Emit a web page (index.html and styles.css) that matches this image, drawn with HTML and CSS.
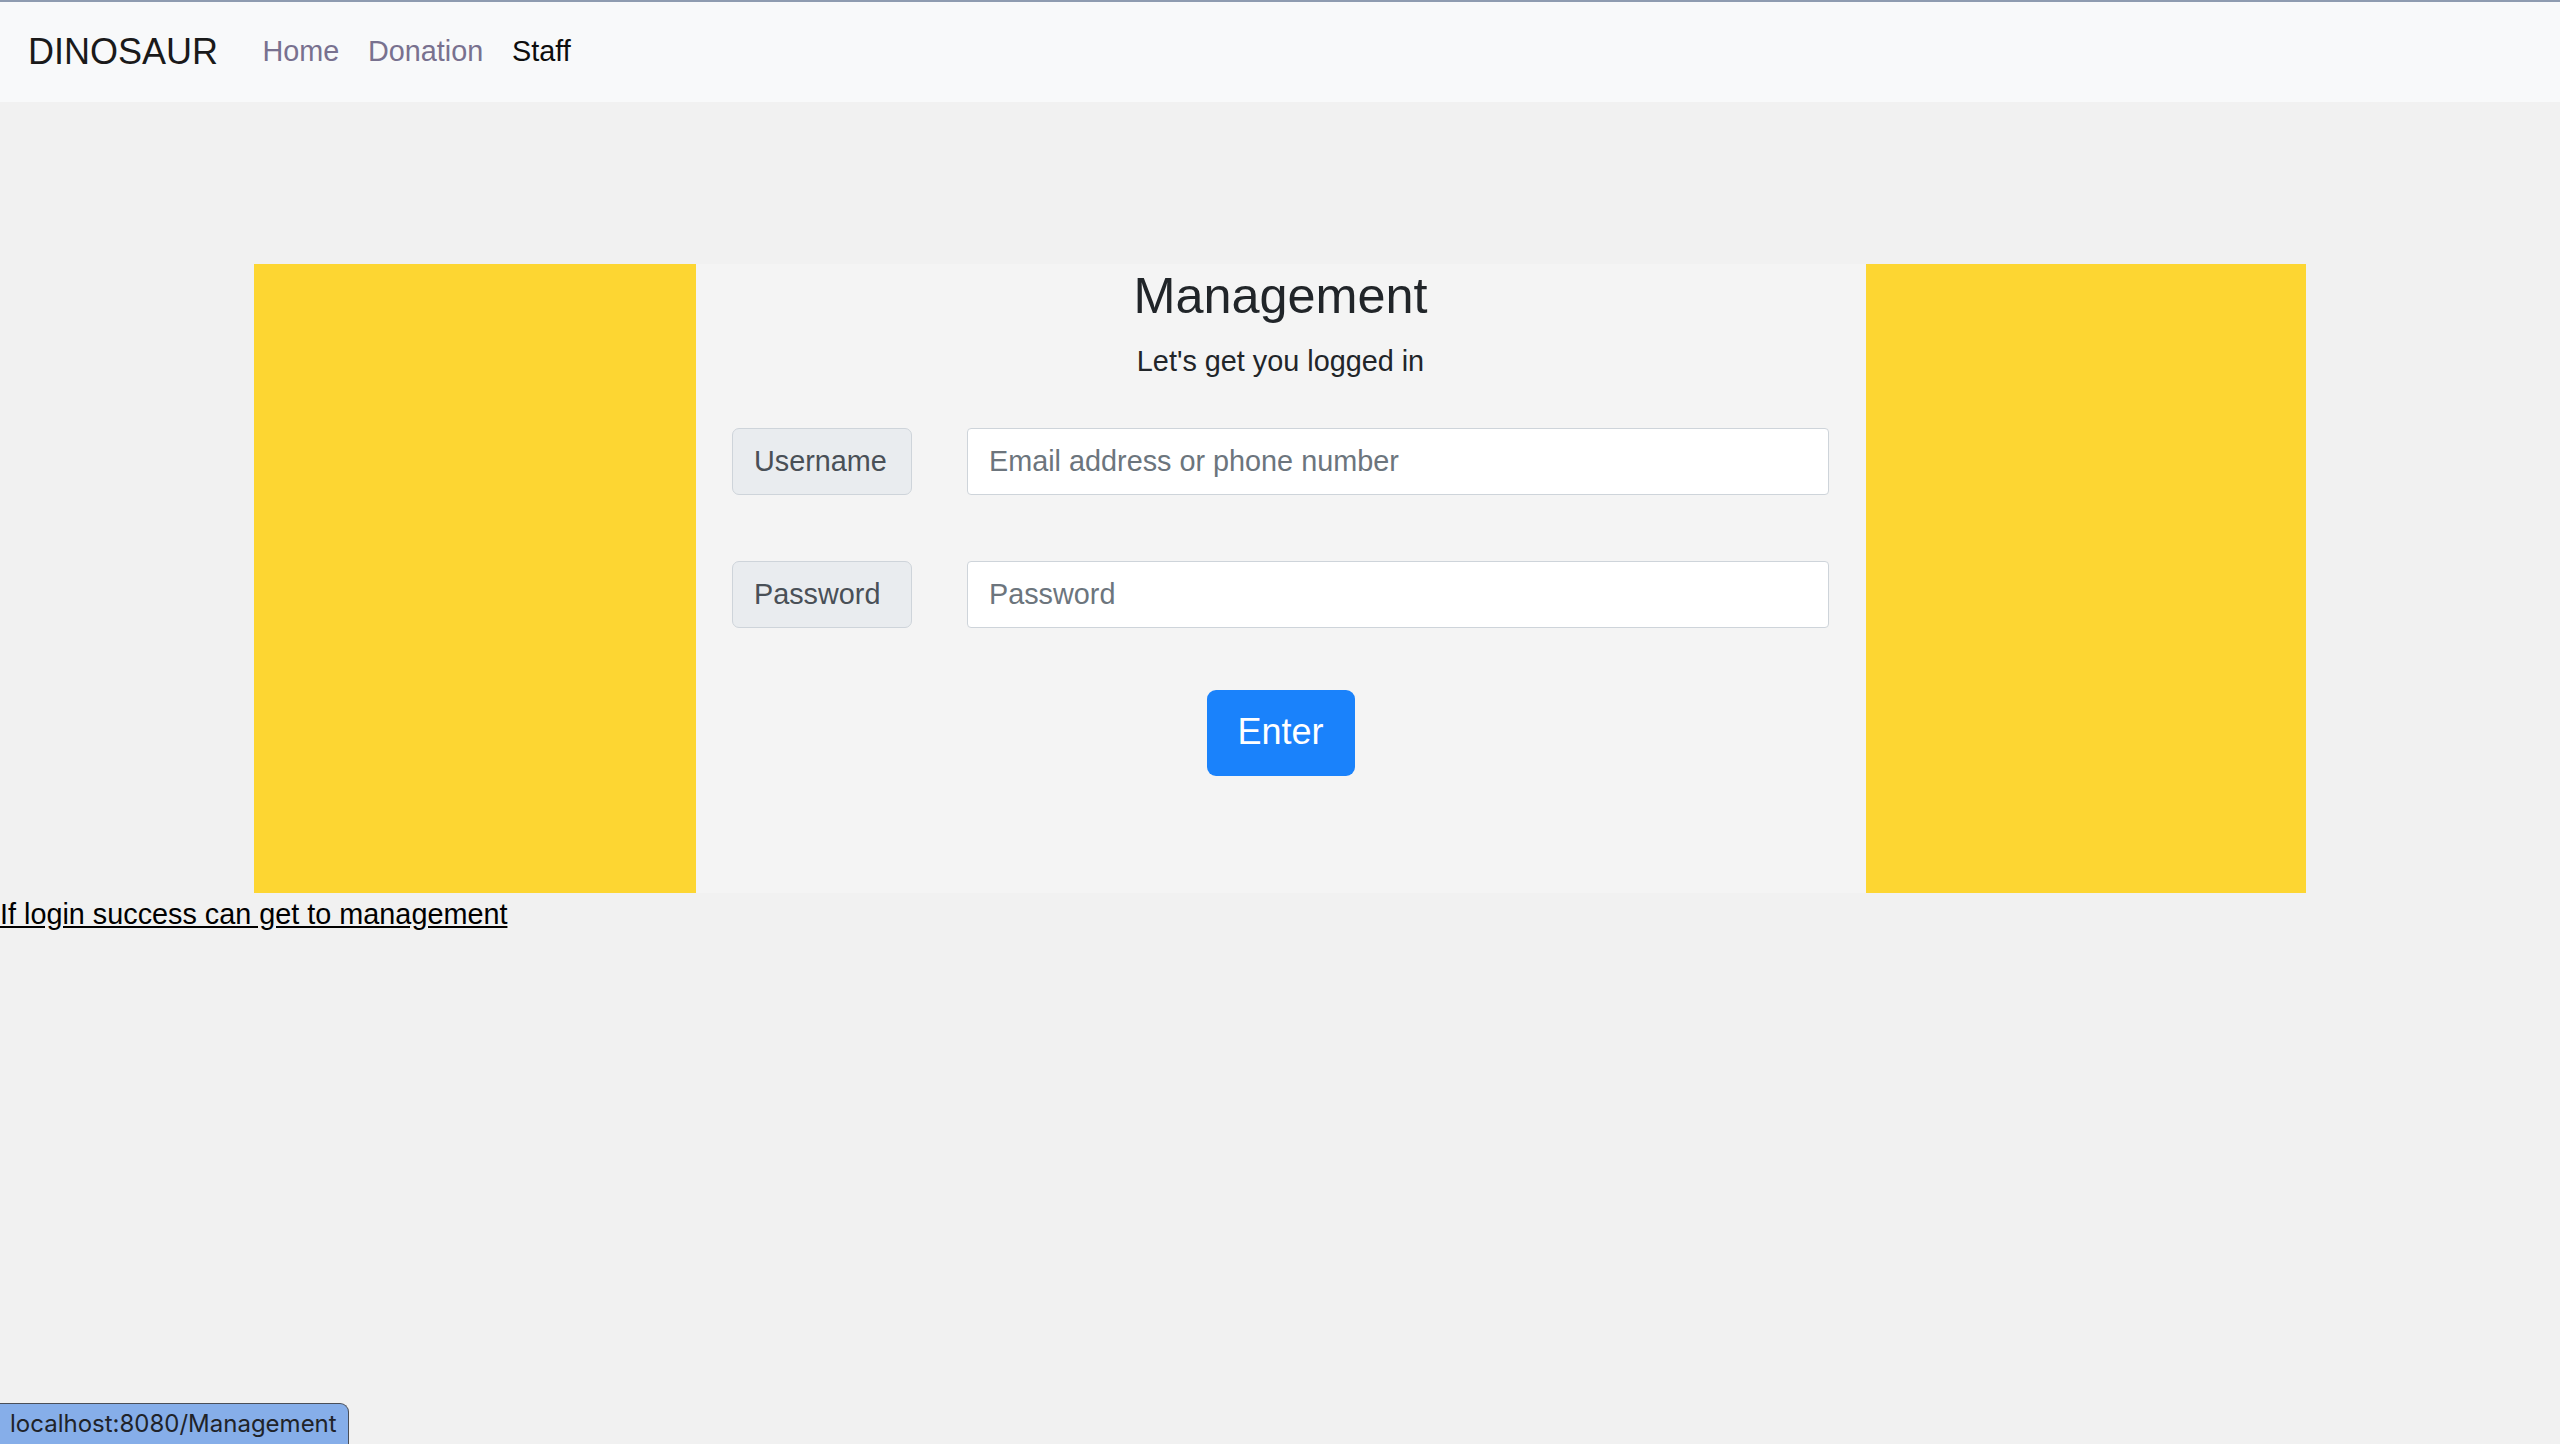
FILE: index.html
```html
<!DOCTYPE html>
<html lang="en">
<head>
<meta charset="utf-8">
<title>Management</title>
<link rel="stylesheet" href="styles.css">
</head>
<body>
<div class="topline"></div>
<nav class="navbar">
  <a class="brand" href="#">DINOSAUR</a>
  <ul class="nav">
    <li><a class="nav-link" href="#">Home</a></li>
    <li><a class="nav-link" href="#">Donation</a></li>
    <li><a class="nav-link active" href="#">Staff</a></li>
  </ul>
</nav>
<main class="page">
  <div class="card">
    <div class="side"></div>
    <div class="panel">
      <h2 class="title">Management</h2>
      <p class="subtitle">Let's get you logged in</p>
      <form class="form">
        <div class="row">
          <label class="label" for="user">Username</label>
          <input class="input" id="user" type="text" placeholder="Email address or phone number">
        </div>
        <div class="row">
          <label class="label" for="pass">Password</label>
          <input class="input" id="pass" type="password" placeholder="Password">
        </div>
        <div class="actions">
          <button class="btn" type="button">Enter</button>
        </div>
      </form>
    </div>
    <div class="side side-right"></div>
  </div>
  <a class="below-link" href="#">If login success can get to management</a>
</main>
<div class="status">localhost:8080/Management</div>
</body>
</html>
```

FILE: styles.css
```css
html, body {
  margin: 0;
  padding: 0;
}
body {
  background: #f1f1f1;
  font-family: "Liberation Sans", Arial, sans-serif;
  font-size: 28.8px;
  line-height: 1.5;
  color: #212529;
  min-height: 1444px;
}
.topline {
  height: 2px;
  background: #8e9bb0;
}
.navbar {
  height: 100px;
  background: #f8f9fa;
  display: flex;
  align-items: center;
  padding: 0 28px;
  box-sizing: border-box;
}
.brand {
  font-size: 36px;
  line-height: 1;
  color: #1a1a1a;
  text-decoration: none;
  margin-right: 30px;
}
.nav {
  display: flex;
  list-style: none;
  margin: 0;
  padding: 0;
}
.nav-link {
  display: block;
  padding: 0 14.4px;
  font-size: 28.8px;
  color: #78718f;
  text-decoration: none;
}
.nav-link.active {
  color: #0d0d0d;
}
.page {
  padding-top: 162px;
}
.card {
  width: 2052px;
  height: 629px;
  margin: 0 auto;
  display: flex;
}
.side {
  width: 442px;
  background: #fdd632;
}
.side-right {
  width: 440px;
}
.panel {
  flex: 1;
  background: #f4f4f4;
  padding: 2px 37px 0 36px;
  text-align: center;
}
.title {
  margin: 0 0 14px;
  font-size: 50.4px;
  font-weight: 400;
  line-height: 1.2;
  color: #212529;
}
.subtitle {
  margin: 0 0 44.5px;
  font-size: 28.8px;
  color: #212529;
}
.form {
  display: flex;
  flex-direction: column;
  gap: 66px;
}
.row {
  display: grid;
  grid-template-columns: 180px 1fr;
  column-gap: 55px;
  height: 67px;
}
.label {
  box-sizing: border-box;
  height: 67px;
  display: flex;
  align-items: center;
  padding: 0 21px;
  background: #e9ecef;
  border: 1.5px solid #ced4da;
  border-radius: 7px;
  color: #495057;
  font-size: 28.8px;
  text-align: left;
}
.input {
  box-sizing: border-box;
  height: 67px;
  width: 100%;
  padding: 0 21px;
  background: #fff;
  border: 1.5px solid #ced4da;
  border-radius: 4px;
  font-family: "Liberation Sans", Arial, sans-serif;
  font-size: 28.8px;
  color: #495057;
}
.input::placeholder {
  color: #6c757d;
}
.actions {
  display: flex;
  justify-content: center;
  margin-top: -4.5px;
}
.btn {
  width: 148px;
  height: 86px;
  border: 0;
  border-radius: 9px;
  background: #1a82fb;
  color: #fff;
  font-family: "Liberation Sans", Arial, sans-serif;
  font-size: 36px;
  line-height: 1;
  padding: 0 0 2px;
}
.below-link {
  display: inline-block;
  color: #000;
  text-decoration: underline;
  font-size: 28.8px;
  line-height: 42px;
}
.status {
  position: fixed;
  left: 0;
  bottom: 0;
  width: 349px;
  height: 41px;
  box-sizing: border-box;
  background: #86aee9;
  border-top: 1px solid #4a4f58;
  border-right: 1px solid #4a4f58;
  border-top-right-radius: 9px;
  padding-left: 10px;
  font-family: Inter, "Liberation Sans", sans-serif;
  font-size: 24px;
  line-height: 40px;
  color: #1f2329;
  white-space: nowrap;
}
```
